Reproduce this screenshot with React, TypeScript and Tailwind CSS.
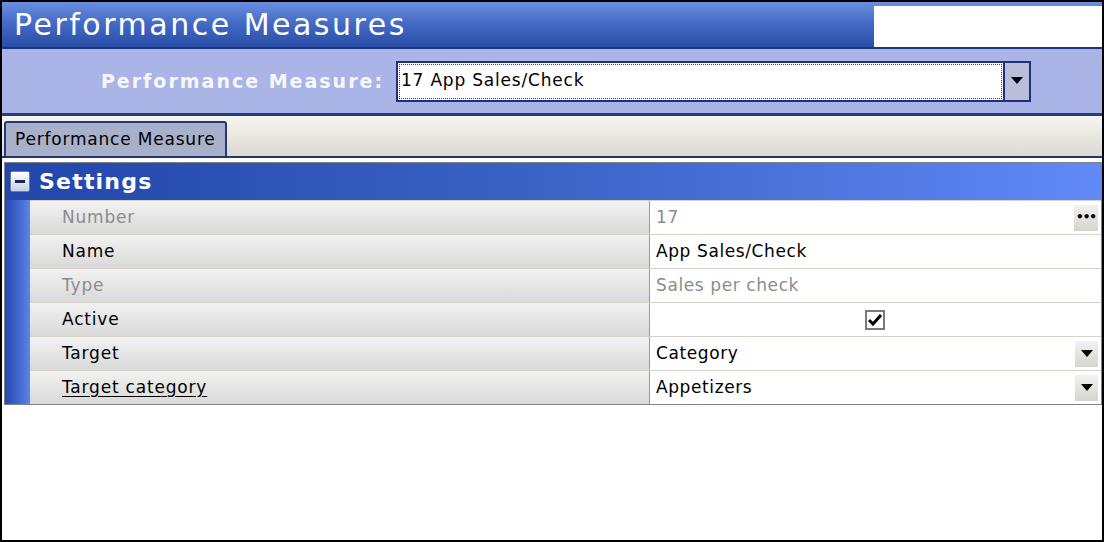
import React from 'react';

const font = { fontFamily: '"DejaVu Sans", Tahoma, sans-serif' };

type Row = {
  label: string;
  value: string;
  dim?: boolean;
  underline?: boolean;
  kind?: 'ellipsis' | 'check' | 'dropdown';
};

const rows: Row[] = [
  { label: 'Number', value: '17', dim: true, kind: 'ellipsis' },
  { label: 'Name', value: 'App Sales/Check' },
  { label: 'Type', value: 'Sales per check', dim: true },
  { label: 'Active', value: '', kind: 'check' },
  { label: 'Target', value: 'Category', kind: 'dropdown' },
  { label: 'Target category', value: 'Appetizers', underline: true, kind: 'dropdown' },
];

const Arrow = () => (
  <svg width="12" height="8" viewBox="0 0 12 8">
    <path d="M0 0h12L6 7z" fill="#000" />
  </svg>
);

const App = () => {
  return (
    <div className="w-[1104px] h-[542px] bg-black p-[2px]" style={font}>
      <div className="flex h-full flex-col bg-white overflow-hidden">
        {/* title bar */}
        <div className="flex h-[45px] items-center bg-gradient-to-b from-[#6b8fe0] via-[#4268c4] to-[#2a4ea6]">
          <div className="flex-1 pl-3 text-[30px] leading-none text-white tracking-[2.5px]">
            Performance Measures
          </div>
          <div className="mt-[3px] h-[41px] w-[228px] bg-white" />
        </div>
        <div className="h-[2px] bg-[#1c3580]" />

        {/* selector bar */}
        <div className="flex h-[64px] items-center bg-[#aab4e6]">
          <div className="w-[394px] pr-[12px] text-right text-[19px] font-bold text-[#f5f7ff] tracking-[2px]">
            Performance Measure:
          </div>
          <div className="flex h-[41px] w-[635px] border-2 border-[#1e2f7c] bg-white">
            <div className="m-[1px] flex flex-1 items-center border border-dotted border-[#444] pl-[1px] text-[17px] text-black tracking-[0.8px]">
              17 App Sales/Check
            </div>
            <div className="flex w-[26px] items-center justify-center border-l-2 border-[#1e2f7c] bg-[#b9bfd9]">
              <Arrow />
            </div>
          </div>
        </div>
        <div className="h-[3px] bg-[#283c7a]" />

        {/* tab strip */}
        <div className="flex h-[40px] items-end bg-gradient-to-b from-[#f6f5f1] to-[#dcd9d1] pl-[2px]">
          <div className="flex h-[35px] w-[223px] items-center rounded-tl-[3px] rounded-tr-[3px] border-2 border-b-0 border-[#24387a] bg-[#a8b1c9] pl-[9px] text-[17px] text-black tracking-[0.8px]">
            Performance Measure
          </div>
        </div>
        <div className="h-[2px] bg-[#23356e]" />

        {/* grid */}
        <div className="flex-1 bg-white pt-[4px] pl-[2px] pr-[0px]">
          <div className="border border-[#7f8388] bg-[#d8d8d8]">
            <div className="flex h-[37px] items-center bg-gradient-to-r from-[#2246a9] via-[#3c63c6] to-[#6189f8]">
              <div className="ml-[5px] flex h-[21px] w-[20px] items-center justify-center rounded-[2px] border border-[#6d7fa8] bg-gradient-to-b from-[#ffffff] to-[#c8d0e0]">
                <div className="h-[3px] w-[10px] bg-[#1a2a50]" />
              </div>
              <div className="ml-[9px] text-[22px] font-bold text-white tracking-[1.2px]">Settings</div>
            </div>
            <div className="flex">
              <div className="w-[25px] bg-gradient-to-r from-[#2448b2] to-[#5d84ea]" />
              <div className="flex-1">
                {rows.map((r) => (
                  <div key={r.label} className="flex h-[34px] border-t border-[#d6d2c6]">
                    <div
                      className={`flex w-[619px] items-center bg-gradient-to-b from-[#f2f2f2] to-[#d9d9d9] pl-[32px] text-[17px] tracking-[0.8px] ${
                        r.dim ? 'text-[#8c8c8c]' : 'text-black'
                      } ${r.underline ? 'underline underline-offset-[3px]' : ''}`}
                    >
                      {r.label}
                    </div>
                    <div className="w-px bg-[#9a9a9a]" />
                    <div
                      className={`flex flex-1 items-center bg-white pl-[6px] text-[17px] tracking-[0.6px] ${
                        r.dim ? 'text-[#8c8c8c]' : 'text-black'
                      }`}
                    >
                      {r.kind === 'check' ? (
                        <div className="flex flex-1 justify-center pr-[8px]">
                          <div className="flex h-[20px] w-[20px] items-center justify-center border-2 border-[#7a7a7a] bg-white">
                            <svg width="14" height="12" viewBox="0 0 14 12">
                              <path d="M1 6l4 4 8-9" fill="none" stroke="#000" strokeWidth="3" />
                            </svg>
                          </div>
                        </div>
                      ) : (
                        <span className="flex-1">{r.value}</span>
                      )}
                      {r.kind === 'ellipsis' && (
                        <div className="mr-[3px] flex h-[26px] w-[24px] items-center justify-center bg-gradient-to-b from-[#f2f2f2] to-[#d6d4cc] pb-[2px] text-[12px] font-bold text-black tracking-[-1px]">
                          •••
                        </div>
                      )}
                      {r.kind === 'dropdown' && (
                        <div className="mr-[3px] flex h-[26px] w-[23px] items-center justify-center bg-gradient-to-b from-[#f2f2f2] to-[#d6d4cc]">
                          <Arrow />
                        </div>
                      )}
                    </div>
                  </div>
                ))}
              </div>
            </div>
          </div>
        </div>
      </div>
    </div>
  );
};

export default App;
